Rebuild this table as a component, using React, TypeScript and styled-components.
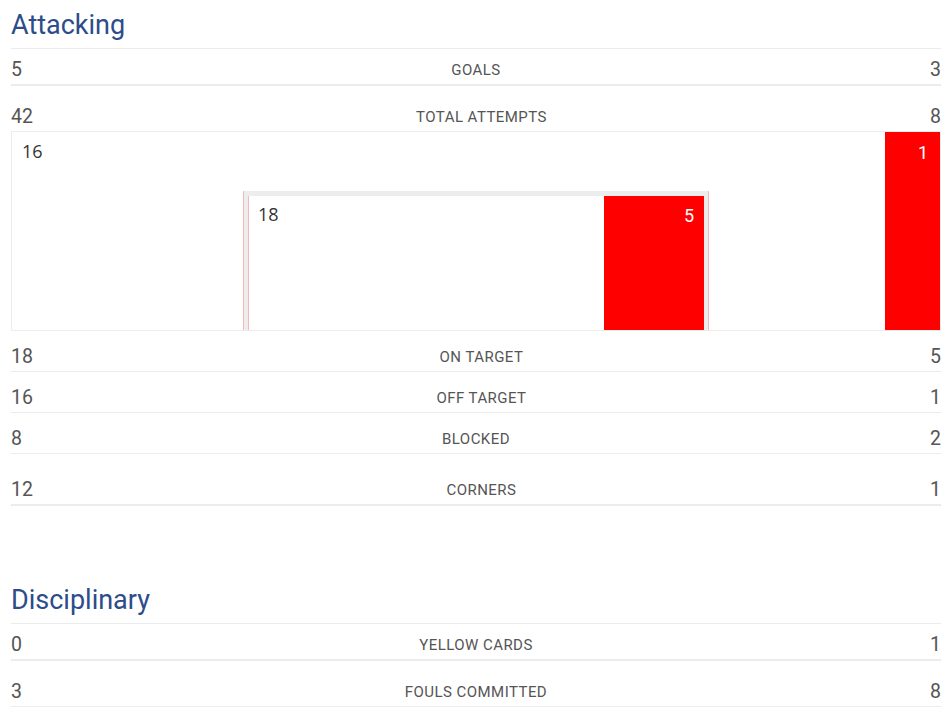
import React from "react";
import styled, { createGlobalStyle } from "styled-components";

const Global = createGlobalStyle`
  html, body { margin: 0; padding: 0; background: #fff; }
  body { font-family: Roboto, "Liberation Sans", Arial, sans-serif; }
`;

const Page = styled.div`
  padding: 0 11px;
  width: 930px;
`;

const Section = styled.section<{ $gap?: number }>`
  margin-top: ${(p) => p.$gap ?? 0}px;
`;

const Heading = styled.h2`
  margin: 0;
  padding: 9px 0 7px;
  font-size: 27px;
  line-height: 32px;
  font-weight: 400;
  color: #2c4c8a;
  border-bottom: 1px solid #ececec;
`;

const Row = styled.div<{ $h: number; $b: number }>`
  box-sizing: border-box;
  display: flex;
  align-items: flex-end;
  height: ${(p) => p.$h}px;
  padding-bottom: 4px;
  border-bottom: ${(p) => p.$b}px solid #ececec;
  line-height: 20px;
  color: #555;
`;

const Value = styled.span`
  font-size: 19.5px;
`;

const Label = styled.span`
  flex: 1;
  text-align: center;
  font-size: 15px;
  letter-spacing: 0.45px;
  text-transform: uppercase;
  color: #555;
`;

const Chart = styled.div`
  box-sizing: border-box;
  display: flex;
  height: 199px;
  border: 1px solid #ececec;
  border-top: none;
`;

const Pane = styled.div`
  flex: 1;
  display: flex;
  flex-direction: column;
`;

const ChartLabel = styled.div<{ $pad: string }>`
  font-family: "Open Sans", "Noto Sans", sans-serif;
  font-size: 18px;
  line-height: 20px;
  color: #333;
  padding: ${(p) => p.$pad};
`;

const Bar = styled.div<{ $w: number; $pad: string }>`
  box-sizing: border-box;
  width: ${(p) => p.$w}px;
  background: #ff0000;
  color: #fff;
  text-align: right;
  font-size: 18px;
  line-height: 20px;
  padding: ${(p) => p.$pad};
`;

const Nested = styled.div`
  box-sizing: border-box;
  margin-top: auto;
  margin-left: 231px;
  width: 466px;
  height: 139px;
  display: flex;
  background: #ededed;
  border-left: 1px solid #f5b8b8;
  border-right: 1px solid #f5b8b8;
  padding: 5px 4px 0;
`;

const Inner = styled.div`
  flex: 1;
  display: flex;
  background: #fff;
  border-left: 1px solid #f5b8b8;
`;

const Grow = styled.div`
  flex: 1;
`;

type Stat = { l: string; r: string; label: string; h: number; b: number };

const StatRow = ({ s }: { s: Stat }) => (
  <Row $h={s.h} $b={s.b}>
    <Value>{s.l}</Value>
    <Label>{s.label}</Label>
    <Value>{s.r}</Value>
  </Row>
);

const attackTop: Stat[] = [
  { l: "5", r: "3", label: "Goals", h: 37, b: 2 },
  { l: "42", r: "8", label: "Total attempts", h: 46, b: 1 },
];

const attackBottom: Stat[] = [
  { l: "18", r: "5", label: "On target", h: 41, b: 1 },
  { l: "16", r: "1", label: "Off target", h: 41, b: 1 },
  { l: "8", r: "2", label: "Blocked", h: 41, b: 1 },
  { l: "12", r: "1", label: "Corners", h: 52, b: 2 },
];

const discipline: Stat[] = [
  { l: "0", r: "1", label: "Yellow cards", h: 37, b: 2 },
  { l: "3", r: "8", label: "Fouls committed", h: 46, b: 1 },
];

export default function App() {
  return (
    <Page>
      <Global />
      <Section>
        <Heading>Attacking</Heading>
        {attackTop.map((s) => (
          <StatRow key={s.label} s={s} />
        ))}
        <Chart>
          <Pane>
            <ChartLabel $pad="9px 10px 0">16</ChartLabel>
            <Nested>
              <Inner>
                <Grow>
                  <ChartLabel $pad="8px 9px 0">18</ChartLabel>
                </Grow>
                <Bar $w={100} $pad="10px 10px 0">5</Bar>
              </Inner>
            </Nested>
          </Pane>
          <Bar $w={55} $pad="11px 12px 0">1</Bar>
        </Chart>
        {attackBottom.map((s) => (
          <StatRow key={s.label} s={s} />
        ))}
      </Section>
      <Section $gap={69}>
        <Heading>Disciplinary</Heading>
        {discipline.map((s) => (
          <StatRow key={s.label} s={s} />
        ))}
      </Section>
    </Page>
  );
}
